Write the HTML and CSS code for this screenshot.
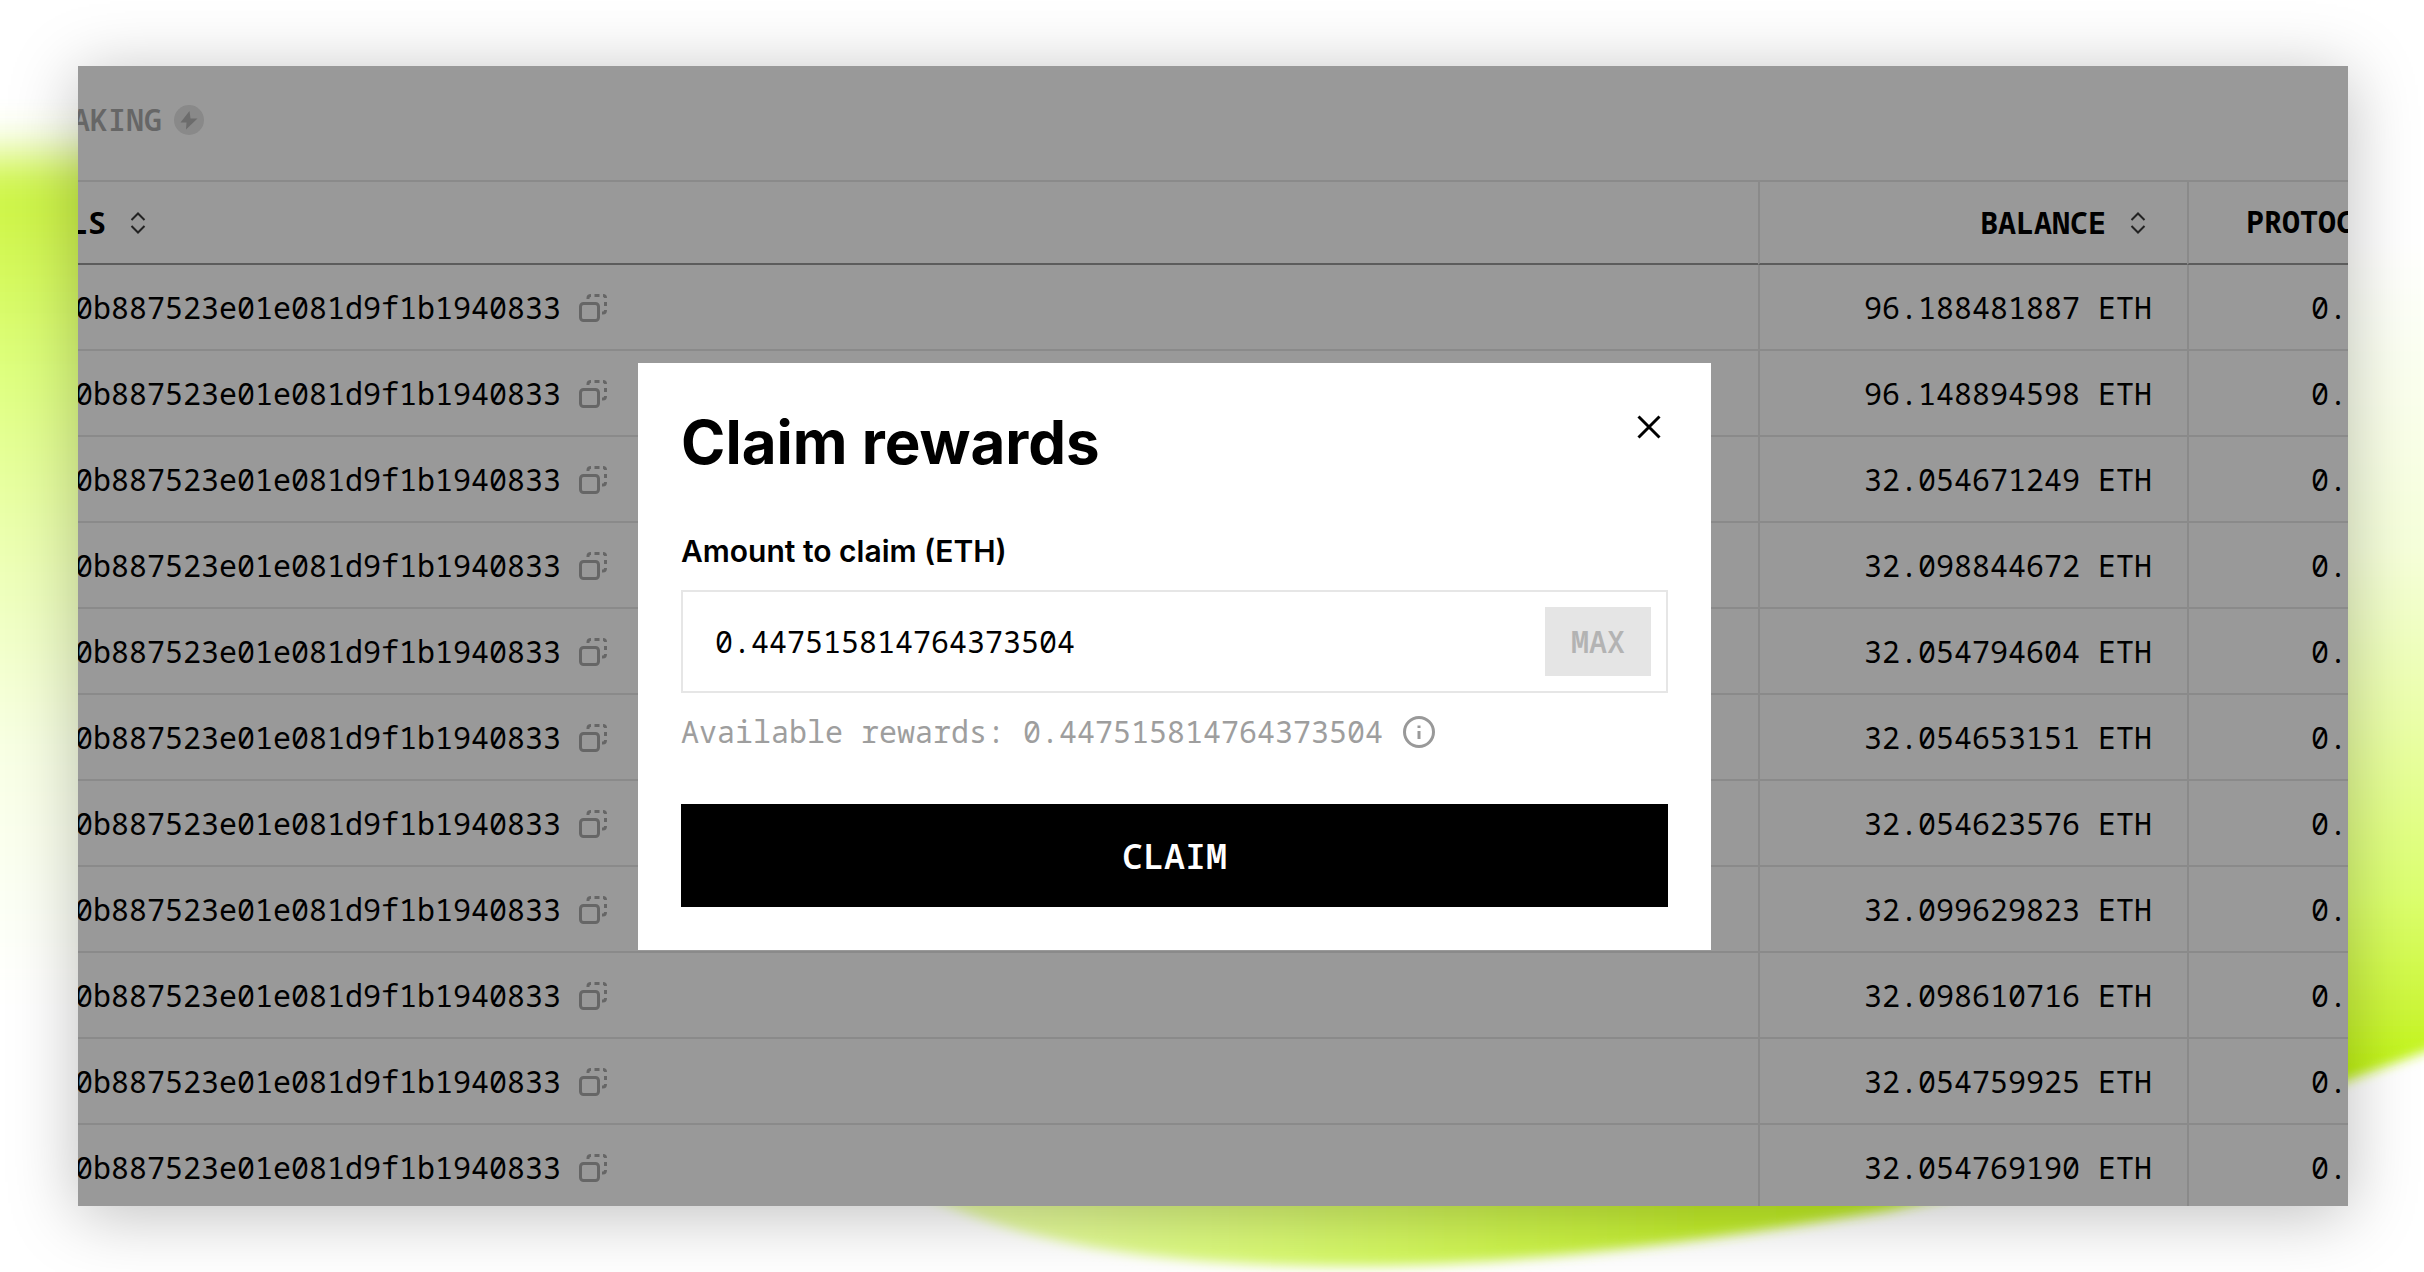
FILE: index.html
```
<!DOCTYPE html>
<html lang="en">
<head>
    <meta charset="UTF-8">
    <meta name="viewport" content="width=device-width, initial-scale=1.0">
    <title>Claim rewards</title>
    <link rel="stylesheet" href="styles.css">
</head>
<body>
    <svg class="backdrop" viewBox="0 0 2424 1272" preserveAspectRatio="none" aria-hidden="true">
        <defs>
            <linearGradient id="leftFade" x1="0" y1="0" x2="0" y2="1">
                <stop offset="0" stop-color="#cbf440"/>
                <stop offset="0.08" stop-color="#d0f64c"/>
                <stop offset="0.25" stop-color="#deff7d"/>
                <stop offset="0.45" stop-color="#ebffae"/>
                <stop offset="0.7" stop-color="#f8ffe4"/>
                <stop offset="1" stop-color="#ffffff"/>
            </linearGradient>
            <linearGradient id="rightFade" x1="0" y1="0" x2="0" y2="1">
                <stop offset="0" stop-color="#ffffff"/>
                <stop offset="0.35" stop-color="#f6ffda"/>
                <stop offset="0.55" stop-color="#eaffa6"/>
                <stop offset="0.74" stop-color="#dcff6e"/>
                <stop offset="0.86" stop-color="#cdf73c"/>
                <stop offset="0.94" stop-color="#c0f412"/>
                <stop offset="1" stop-color="#bff210"/>
            </linearGradient>
            <linearGradient id="bottomFade" x1="0" y1="0" x2="1" y2="0">
                <stop offset="0" stop-color="#eeffb8"/>
                <stop offset="0.45" stop-color="#d4f860"/>
                <stop offset="0.7" stop-color="#c4f02c"/>
                <stop offset="1" stop-color="#bdf01c"/>
            </linearGradient>
            <filter id="soft" x="-50%" y="-50%" width="200%" height="200%">
                <feGaussianBlur stdDeviation="24"/>
            </filter>
            <filter id="edge" x="-10%" y="-10%" width="120%" height="120%">
                <feGaussianBlur stdDeviation="6"/>
            </filter>
        </defs>
        <path d="M-100 156H300V1000H-100Z" fill="url(#leftFade)" filter="url(#soft)"/>
        <path d="M2200 240H2540V1006L2424 1052L2348 1080L2200 1130Z" fill="url(#rightFade)" filter="url(#edge)"/>
        <path d="M850 1150C960 1230 1100 1266 1350 1266Q1560 1266 1890 1210L2060 1170V1100H850Z" fill="url(#bottomFade)" filter="url(#edge)"/>
    </svg>

    <main class="frame">
        <div class="dashboard">
            <div class="topbar">
                <span>AKING</span>
                <svg class="bolt" viewBox="0 0 30 30" aria-hidden="true">
                    <circle cx="15" cy="15" r="15" fill="#898989"/>
                    <path d="M15.5 6L6.5 17.5H12.5L12 24.5L23.5 13.5H16.5Z" fill="#6c6c6c"/>
                </svg>
            </div>
            <table class="validators">
                <thead>
                    <tr>
                        <th class="details"><button class="sort" type="button">LS <svg viewBox="0 0 16 22" aria-hidden="true"><path d="M1.5 8L8 1.5L14.5 8M1.5 14L8 20.5L14.5 14"/></svg></button></th>
                        <th class="balance"><button class="sort" type="button">BALANCE <svg viewBox="0 0 16 22" aria-hidden="true"><path d="M1.5 8L8 1.5L14.5 8M1.5 14L8 20.5L14.5 14"/></svg></button></th>
                        <th class="protocol">PROTOC</th>
                    </tr>
                </thead>
                <tbody id="rows"></tbody>
            </table>
        </div>

        <div class="overlay">
            <form class="modal" role="dialog" aria-labelledby="modal-title">
                <div class="modal-header">
                    <h1 id="modal-title">Claim rewards</h1>
                    <button class="close" type="button" aria-label="Close">
                        <svg viewBox="0 0 24 24" aria-hidden="true"><path d="M1.5 1.5L22.5 22.5M22.5 1.5L1.5 22.5"/></svg>
                    </button>
                </div>
                <label for="amount">Amount to claim (ETH)</label>
                <div class="field">
                    <input id="amount" type="text" value="0.447515814764373504">
                    <button class="max" type="button" disabled>MAX</button>
                </div>
                <p class="available">
                    <span>Available rewards: 0.447515814764373504</span>
                    <svg viewBox="0 0 32 32" aria-hidden="true">
                        <circle cx="16" cy="16" r="14.5"/>
                        <path d="M16 15V23M16 9.5V12"/>
                    </svg>
                </p>
                <button class="claim" type="button">CLAIM</button>
            </form>
        </div>
    </main>

    <script>
        const balances = [
            '96.188481887', '96.148894598', '32.054671249', '32.098844672',
            '32.054794604', '32.054653151', '32.054623576', '32.099629823',
            '32.098610716', '32.054759925', '32.054769190'
        ];

        document.getElementById('rows').innerHTML = balances.map(balance => `
            <tr>
                <td class="details">
                    <div class="address">
                        <span>0b887523e01e081d9f1b1940833</span>
                        <button class="copy" type="button" aria-label="Copy">
                            <svg viewBox="0 0 28 28" aria-hidden="true">
                                <rect x="1.5" y="9.5" width="18" height="17" rx="3"/>
                                <path d="M9 5V4Q9 1.5 12 1.5M15.5 1.5H20.5M24 1.5Q26.5 1.5 26.5 4M26.5 8V12M26.5 16Q26.5 19 24 19H23"/>
                            </svg>
                        </button>
                    </div>
                </td>
                <td class="balance">${balance} ETH</td>
                <td class="protocol">0.</td>
            </tr>
        `).join('');
    </script>
</body>
</html>
```

FILE: styles.css
```
* {
    margin: 0;
    padding: 0;
    box-sizing: border-box;
}

body {
    min-height: 100vh;
    padding: 66px 76px 66px 78px;
    background: #fff;
    color: #000;
    font-family: "Noto Sans Mono", "DejaVu Sans Mono", monospace;
    font-size: 30px;
    line-height: 40px;
    overflow: hidden;
}

button,
input {
    font: inherit;
    color: inherit;
    background: none;
    border: none;
}

svg {
    display: block;
    fill: none;
    flex: none;
}

.backdrop {
    position: absolute;
    inset: 0;
    width: 100%;
    height: 100%;
}

.frame {
    position: relative;
    height: calc(100vh - 132px);
    background: #fff;
    box-shadow: 0 8px 64px rgba(0, 0, 0, 0.26);
    overflow: hidden;
}

/* table behind the modal */
.dashboard {
    height: 100%;
    background: #999;
}

.topbar {
    display: flex;
    align-items: center;
    gap: 12px;
    height: 114px;
    padding-bottom: 6px;
    margin-left: -6px;
    color: #666;
    font-weight: 600;
}

.bolt {
    width: 30px;
    height: 30px;
}

.validators {
    width: 100%;
    table-layout: fixed;
    border-collapse: separate;
    border-spacing: 0;
    border-top: 2px solid #8a8a8a;
    white-space: nowrap;
}

.validators th,
.validators td {
    height: 86px;
    border-bottom: 2px solid #8a8a8a;
    border-left: 2px solid #8a8a8a;
    overflow: hidden;
}

.validators th {
    height: 83px;
    padding-bottom: 2px;
    border-bottom-color: #5c5c5c;
    font-weight: 700;
}

.validators td {
    padding-top: 2px;
}

.validators .details {
    border-left: none;
    text-align: left;
}

.validators .balance {
    width: 429px;
    padding-right: 35px;
    text-align: right;
}

.validators .protocol {
    width: 161px;
    padding-left: 57px;
    text-align: left;
}

.validators td.protocol {
    padding-left: 122px;
}

.sort {
    display: inline-flex;
    align-items: center;
    gap: 24px;
    padding-right: 6px;
    vertical-align: middle;
}

.details .sort {
    margin-left: -8px;
}

.sort svg {
    width: 16px;
    height: 22px;
    stroke: #222;
    stroke-width: 2;
}

.address {
    display: flex;
    align-items: center;
    gap: 18px;
    margin-left: -3px;
}

.copy svg {
    width: 28px;
    height: 28px;
    stroke: #666;
    stroke-width: 3;
}

/* modal */
.overlay {
    position: absolute;
    inset: 0;
    display: flex;
    align-items: center;
    justify-content: center;
    padding: 41px 77px 0 0;
}

.modal {
    width: 1073px;
    padding: 43px;
    background: #fff;
    font-size: 30px;
}

.modal-header {
    display: flex;
    justify-content: space-between;
    align-items: flex-start;
    margin-bottom: 53px;
}

.modal h1 {
    font-family: Inter, sans-serif;
    font-size: 60px;
    font-weight: 700;
    line-height: 72px;
}

.close {
    padding: 9px 7px;
}

.close svg {
    width: 24px;
    height: 24px;
    stroke: #000;
    stroke-width: 3;
}

.modal label {
    display: block;
    margin-bottom: 19px;
    font-family: Inter, sans-serif;
    font-weight: 600;
}

.field {
    display: flex;
    align-items: center;
    height: 103px;
    padding: 0 15px 0 32px;
    border: 2px solid #e6e6e6;
}

.field input {
    flex: 1;
    min-width: 0;
    outline: none;
}

.max {
    width: 106px;
    height: 69px;
    background: #e5e5e5;
    color: #b3b3b3;
    font-weight: 600;
}

.available {
    display: flex;
    align-items: center;
    gap: 20px;
    margin: 19px 0 52px;
    color: #9e9e9e;
}

.available svg {
    width: 32px;
    height: 32px;
    stroke: #999;
    stroke-width: 3;
}

.claim {
    display: block;
    width: 100%;
    height: 103px;
    background: #000;
    color: #fff;
    font-size: 35px;
    font-weight: 600;
}
```
